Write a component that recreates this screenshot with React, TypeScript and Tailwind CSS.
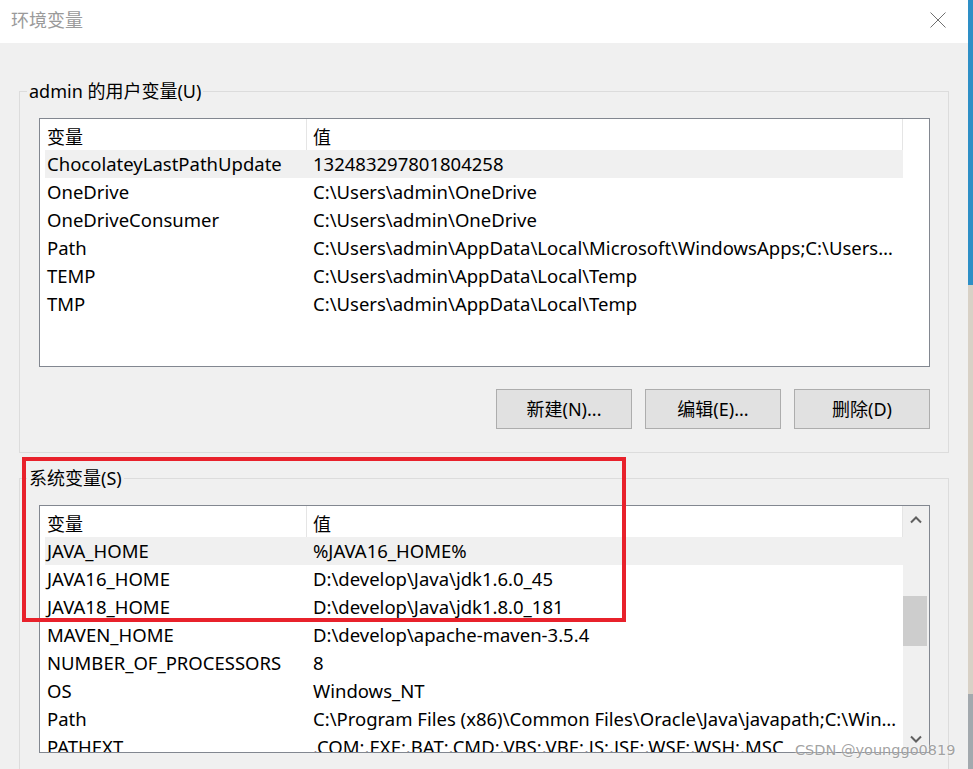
import React from 'react';

type Row = { name: string; value: string };

const userRows: Row[] = [
  { name: 'ChocolateyLastPathUpdate', value: '132483297801804258' },
  { name: 'OneDrive', value: 'C:\\Users\\admin\\OneDrive' },
  { name: 'OneDriveConsumer', value: 'C:\\Users\\admin\\OneDrive' },
  { name: 'Path', value: 'C:\\Users\\admin\\AppData\\Local\\Microsoft\\WindowsApps;C:\\Users\\admin\\AppData\\Roaming\\npm' },
  { name: 'TEMP', value: 'C:\\Users\\admin\\AppData\\Local\\Temp' },
  { name: 'TMP', value: 'C:\\Users\\admin\\AppData\\Local\\Temp' },
];

const systemRows: Row[] = [
  { name: 'JAVA_HOME', value: '%JAVA16_HOME%' },
  { name: 'JAVA16_HOME', value: 'D:\\develop\\Java\\jdk1.6.0_45' },
  { name: 'JAVA18_HOME', value: 'D:\\develop\\Java\\jdk1.8.0_181' },
  { name: 'MAVEN_HOME', value: 'D:\\develop\\apache-maven-3.5.4' },
  { name: 'NUMBER_OF_PROCESSORS', value: '8' },
  { name: 'OS', value: 'Windows_NT' },
  { name: 'Path', value: 'C:\\Program Files (x86)\\Common Files\\Oracle\\Java\\javapath;C:\\Windows\\system32' },
  { name: 'PATHEXT', value: '.COM;.EXE;.BAT;.CMD;.VBS;.VBE;.JS;.JSE;.WSF;.WSH;.MSC' },
];

const Chevron: React.FC<{ down?: boolean }> = ({ down }) => (
  <svg width="12" height="8" viewBox="0 0 12 8" fill="none">
    <polyline
      points={down ? '1,1.5 6,6.5 11,1.5' : '1,6.5 6,1.5 11,6.5'}
      stroke="#606060"
      strokeWidth="2"
    />
  </svg>
);

const ListBox: React.FC<{ rows: Row[]; scroll?: boolean; className?: string }> = ({ rows, scroll, className }) => (
  <div className={`flex w-[891px] overflow-hidden border border-[#828790] bg-white ${className ?? ''}`}>
    <div className="flex w-[863px] shrink-0 flex-col">
      <div className="flex h-[31px] shrink-0">
        <div className="flex h-full w-[267px] items-center border-r border-[#e5e5e5] pt-[5px] pl-[7px]">变量</div>
        <div className="flex h-full flex-1 items-center border-r border-[#e5e5e5] pt-[5px] pl-[6px]">值</div>
      </div>
      {rows.map((row, i) => (
        <div
          key={row.name + i}
          className={`ml-[5px] flex h-[28px] w-[858px] shrink-0 items-center text-[18.5px] ${i === 0 ? 'bg-[#f0f0f0]' : ''}`}
        >
          <div className="w-[261px] shrink-0 truncate pl-[2px]">{row.name}</div>
          <div className="min-w-0 flex-1 truncate pr-[6px] pl-[7px]">{row.value}</div>
        </div>
      ))}
    </div>
    {scroll && (
      <div className="flex w-[26px] shrink-0 flex-col bg-[#f0f0f0]">
        <div className="flex h-[28px] shrink-0 items-center justify-center">
          <Chevron />
        </div>
        <div className="flex-1">
          <div className="mt-[62px] h-[50px] w-[24px] bg-[#cdcdcd]" />
        </div>
        <div className="flex h-[27px] shrink-0 items-center justify-center">
          <Chevron down />
        </div>
      </div>
    )}
  </div>
);

const Button: React.FC<{ label: string }> = ({ label }) => (
  <button className="flex h-[40px] w-[136px] items-center justify-center border border-[#adadad] bg-[#e1e1e1] text-[18px]">
    {label}
  </button>
);

export default function App() {
  return (
    <div className="relative flex h-[769px] w-[973px] overflow-hidden font-['Noto_Sans','Noto_Sans_CJK_SC',sans-serif] text-[18px] leading-[24px] text-black">
      <div className="flex w-[968px] shrink-0 flex-col bg-[#f0f0f0]">
        {/* title bar */}
        <div className="flex h-[43px] shrink-0 items-center justify-between bg-white pr-[22px] pl-[11px]">
          <span className="pb-[4px] text-[18px] text-[#9a9a9a]">环境变量</span>
          <svg width="16" height="16" viewBox="0 0 16 16" className="mb-[4px]">
            <path d="M0.5 0.5 L15.5 15.5 M15.5 0.5 L0.5 15.5" stroke="#707070" strokeWidth="1" />
          </svg>
        </div>

        <div className="flex-1 pt-[36px] pl-[19px]">
          {/* user variables */}
          <fieldset className="m-0 w-[930px] min-w-0 border border-[#dcdcdc] p-0">
            <legend className="ml-[7px] px-[2px] leading-[24px]">admin 的用户变量(U)</legend>
            <div className="pt-[15px] pr-[18px] pb-[23px] pl-[19px]">
              <ListBox rows={userRows} className="h-[249px]" />
              <div className="mt-[22px] flex justify-end gap-[13px]">
                <Button label="新建(N)..." />
                <Button label="编辑(E)..." />
                <Button label="删除(D)" />
              </div>
            </div>
          </fieldset>

          {/* system variables */}
          <fieldset className="mt-[13px] w-[930px] min-w-0 border border-[#dcdcdc] p-0">
            <legend className="ml-[7px] px-[2px] leading-[24px]">系统变量(S)</legend>
            <div className="pt-[15px] pr-[18px] pb-[40px] pl-[19px]">
              <ListBox rows={systemRows} scroll className="h-[248px]" />
            </div>
          </fieldset>
        </div>
      </div>

      {/* desktop edge behind the dialog */}
      <div className="flex w-[5px] shrink-0 flex-col">
        <div className="h-[285px] bg-[#2e8fc6]" />
        <div className="flex-1 bg-[#d8d1c6]" />
        <div className="h-[75px] bg-[#a3a9ae]" />
      </div>

      {/* red highlight drawn over the screenshot */}
      <div className="pointer-events-none absolute top-[457px] left-[22px] h-[165px] w-[604px] border-[4px] border-[#e8212b]" />

      {/* watermark */}
      <div className="pointer-events-none absolute top-[740px] left-[795px] font-['DejaVu_Sans',sans-serif] text-[14.5px] leading-[20px] text-[#8a8a8a]/80 [text-shadow:0_0_2px_#ffffff]">
        CSDN @younggo0819
      </div>
    </div>
  );
}
